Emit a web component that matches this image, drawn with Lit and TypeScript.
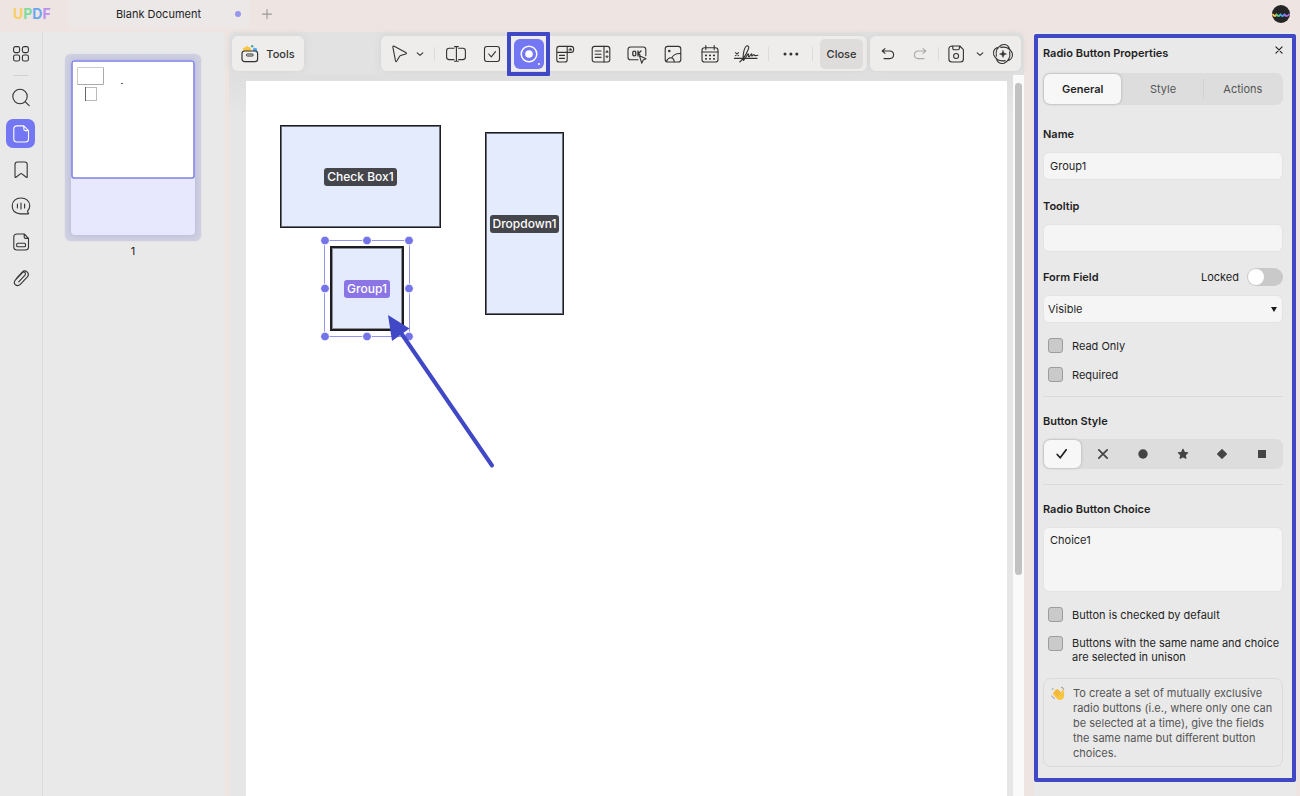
import { LitElement, html, css, svg } from "lit";
import { customElement, property, state } from "lit/decorators.js";
import { classMap } from "lit/directives/class-map.js";

const ICONS: Record<string, unknown> = {
  grid: svg`<rect x="3.6" y="3.6" width="6" height="6" rx="1.8"/><rect x="12.4" y="3.6" width="6" height="6" rx="1.8"/><rect x="3.6" y="12" width="6" height="6" rx="1.8"/><rect x="12.4" y="12" width="6" height="6" rx="1.8"/>`,
  search: svg`<circle cx="10" cy="9.500" r="7.2"/><path d="M15.3 14.8 19.2 18.7"/>`,
  page: svg`<path d="M13.5 2.9H7.2Q3.8 2.9 3.8 6v10Q3.8 19 7.2 19h8Q18.5 19 18.5 16V7.6L13.8 2.9V6Q13.8 7.6 15.4 7.6h3"/>`,
  bookmark: svg`<path d="M5 17.8V5.4Q5 3 7.4 3h7.4Q17.2 3 17.2 5.4v12.4q0 1-.9.4l-4.4-3.3q-.8-.6-1.6 0L6 18.2q-1 .6-1-.4Z"/>`,
  comment: svg`<path d="M17.2 18.9h-7Q2.2 18.2 2.2 10.8C2.2 6 6 3 11 3s8.8 3.2 8.8 7.8q0 3-2.3 5.4.2 1.2 1 2 .5.7-1.3.7Z"/><path d="M7.4 9v4M11 8v6M14.6 9v4"/>`,
  form: svg`<path d="M13.8 3H7.2Q3.8 3 3.8 6v10q0 3 3.4 3h8q3.3 0 3.3-3V7.4L14.2 3v3q0 1.4 1.4 1.4h2.9"/><rect x="6.7" y="12.3" width="8.8" height="3.4" rx="1"/>`,
  clip: svg`<path d="m6.2 11.6 6-6.5q2.4-2.3 4.8-.3 2.6 2.3.4 5l-7.1 7.6q-2.4 2.2-4.9.4-2.2-2-.1-4.6l7.2-7.6q1.3-1.1 2.5 0 1.1 1.2 0 2.5l-6.3 6.7"/>`,
  cursor: svg`<path d="M4.9 4.4q-.3-1.8 1.3-1.1l11.6 6.2q1.5.9-.1 1.5l-5 1.5q-.8.3-1.2 1L8.8 18q-.9 1.4-1.3-.1Z"/>`,
  chevron: svg`<path d="m8.2 9.8 2.8 2.5 2.8-2.5"/>`,
  textfield: svg`<path d="M9 5.3H4.2Q1.6 5.3 1.6 8v6q0 2.6 2.6 2.6H9M13.6 5.3h4.2q2.6 0 2.6 2.7v6q0 2.6-2.6 2.6h-4.2M11.4 4v14M9.5 3.6h3.8M9.5 18.3h3.8"/>`,
  check: svg`<rect x="3.5" y="3.500" width="15" height="15" rx="2.4"/><path d="m7.700 11 2.600 2.800 4.200-5.200"/>`,
  radio: svg`<circle cx="11" cy="11" r="7.8" stroke-width="1.5"/><circle cx="11" cy="11" r="3.8" fill="currentColor" stroke="none"/><circle cx="21" cy="21" r="1" fill="currentColor" stroke="none"/>`,
  dropdown: svg`<path d="M13.2 9.4H2.8V5.8q0-2.4 2.4-2.4h12q2.4 0 2.4 2.4v1.2q0 2.4-2.4 2.4h-4V3.4M2.8 9.4v7.3Q2.8 19 5.2 19h5.6q2.4 0 2.4-2.3V9.4M5.5 12.4h5M5.5 15.4h5"/><path d="M15 7.2h3l-1.5-2Z" fill="currentColor" stroke-width=".5"/>`,
  list: svg`<rect x="2.2" y="3.4" width="17.6" height="15.6" rx="2.5"/><path d="M14 3.4V19M5.2 8h5.8M5.2 11.2h5.8M5.2 14.4h5.8" /><path d="m16 9 1-1.4 1 1.4ZM16 13.4l1 1.4 1-1.4Z" fill="currentColor" stroke-width=".8"/>`,
  ok: svg`<path d="M12 16.8H4.6Q2 16.8 2 14.2V6.6Q2 4 4.6 4h12.6q2.6 0 2.6 2.6v6.2"/><rect x="6.8" y="8.2" width="3" height="4.6" rx="1.4" stroke-width="1.3"/><path d="M12 8v5M15 8l-2.6 2.6L14 12" stroke-width="1.3"/><path d="m13.4 12.7 6.6 3-2.8 1.3-1.5 3.2Z" fill="#eeedeb"/>`,
  image: svg`<rect x="3.2" y="3.4" width="15.6" height="15.6" rx="2.6"/><path d="M4.4 18.2Q7 13.5 10.5 15.3q1.6 1 1.8 3.5M9.6 15Q12.5 10 18.6 10.6"/><circle cx="7.3" cy="8" r=".7" fill="currentColor"/>`,
  calendar: svg`<rect x="3" y="4.8" width="16" height="14.2" rx="2.6"/><path d="M3 9h16M6.8 2.6v4M15.2 2.6v4"/><path d="M6.8 12.4h.4M10.8 12.4h.4M14.8 12.4h.4M6.8 15.8h.4M10.8 15.8h.4M14.8 15.8h.4" stroke-width="1.700"/>`,
  sign: svg`<path d="m.5 9.6 3 3M3.5 9.6l-3 3M-.6 15.4H22"/><path d="M4.8 19Q9.6 15 13.3 6.2q1.2-3.2-.7-3.4-2.4 0-3.7 5.3-1.4 6.2-.3 9.4Q11 14 12.5 11.5q1.4-1.5 1 .5-.6 2 .8 1.7l2-2.7q.8-.4.4 1-.3 1.6.9.6 1-1.4 1.7-.8.2 1.4 3.6.4"/>`,
  dots: svg`<g fill="currentColor" stroke="none"><circle cx="5" cy="11" r="1.5"/><circle cx="10.9" cy="11" r="1.5"/><circle cx="16.8" cy="11" r="1.5"/></g>`,
  undo: svg`<path d="M8 5.6 5.2 8 8 10.4M5.4 8h7.4q3.8.2 3.8 3.8-.1 3.8-3.8 3.8H7"/>`,
  redo: svg`<path d="M14 5.6 16.8 8 14 10.4M16.6 8H9.2q-3.8.2-3.8 3.8.1 3.8 3.8 3.8H15"/>`,
  save: svg`<path d="M7.4 3h7.4L18.4 6.6V16q0 3-3 3H6.9q-3 0-3-3V6q0-3 3.5-3ZM7.8 3v2.2q0 1.6 1.6 1.6h3.4q1.6 0 1.6-1.6V3"/><circle cx="11.1" cy="13" r="2.5"/>`,
  ai: svg`<g stroke-width="1.1"><path d="M4.400 13.200Q2.800 5.200 10 1.800q5-1.400 7.400 3.400M8.800 4.400Q16.800 2.800 20.200 10q1.400 5-3.400 7.400M17.600 8.800q1.600 8-5.600 11.400-5 1.400-7.400-3.400M13.200 17.600q-8 1.600-11.400-5.600-1.400-5 3.400-7.400"/></g><path d="m11 7.400 1 2.600 2.600 1-2.600 1-1 2.600-1-2.600-2.600-1 2.600-1Z" fill="currentColor" stroke-width=".4"/>`,
  close: svg`<path d="m7.900 7.900 6.200 6.200M14.100 7.900l-6.200 6.200"/>`,
  plus: svg`<path d="M11 6.600v9M6.500 11.100h9"/>`,
  styleCheck: svg`<path d="m6.200 11.500 3 3.300 6-8" stroke-width="1.700"/>`,
  styleCross: svg`<path d="m6.800 6.800 8.400 8.400M15.200 6.800l-8.400 8.400" stroke-width="1.700"/>`,
  styleCircle: svg`<circle cx="11" cy="11" r="4.700" fill="currentColor" stroke="none"/>`,
  styleStar: svg`<path d="m11 6.300 1.400 3 3.300.4-2.400 2.300.6 3.300-2.900-1.600-2.900 1.600.6-3.300-2.400-2.300 3.300-.4Z" fill="currentColor"/>`,
  styleDiamond: svg`<path d="M11 6.600 15.400 11 11 15.400 6.600 11Z" fill="currentColor"/>`,
  styleSquare: svg`<rect x="7" y="7" width="8" height="8" fill="currentColor" stroke="none"/>`,
};

@customElement("ui-icon")
class UiIcon extends LitElement {
  @property() name = "";
  static styles = css`
    :host { display: block; width: 22px; height: 22px; flex: none; }
    svg { display: block; overflow: visible; fill: none; stroke: currentColor; stroke-width: 1.1; stroke-linecap: round; stroke-linejoin: round; }
  `;
  render() {
    return html`<svg width="22" height="22" viewBox="0 0 22 22" aria-hidden="true">${ICONS[this.name]}</svg>`;
  }
}

const RAIL = [
  ["search", "Search"], ["page", "Thumbnails"], ["bookmark", "Bookmarks"],
  ["comment", "Comments"], ["form", "Fields"], ["clip", "Attachments"],
];

@customElement("side-rail")
class SideRail extends LitElement {
  static styles = css`
    :host { display: flex; flex-direction: column; align-items: center; gap: 7px; padding: 7px 1px 0 0; width: 41px; border-right: 1px solid #dadcdd; color: #333; flex: none; }
    button { display: grid; place-items: center; width: 29px; height: 29px; padding: 0; border: 0; border-radius: 7px; background: none; color: inherit; }
    .active { background: #7477f3; color: #fff; }
    .divider { width: 15px; height: 1px; background: #d0d0d0; }
  `;
  render() {
    return html`
      <button aria-label="All tools"><ui-icon name="grid"></ui-icon></button>
      <div class="divider"></div>
      ${RAIL.map(([icon, label]) => html`
        <button aria-label=${label} class=${classMap({ active: icon === "page" })}><ui-icon name=${icon}></ui-icon></button>`)}
    `;
  }
}

@customElement("page-thumbnails")
class PageThumbnails extends LitElement {
  static styles = css`
    :host { display: flex; flex-direction: column; align-items: center; gap: 2px; padding: 22px 2px 0 0; box-sizing: border-box; width: 182px; flex: none; font-size: 11px; line-height: 16px; }
    .frame { padding: 6px; border-radius: 6px; background: #cfcfe2; box-shadow: 0 0 2px #d5d5e2; }
    .sheet { display: block; width: 124px; height: 175px; padding: 0; border: 0; border-radius: 4px; background: #e7e7fd; box-shadow: 0 0 5px #b4b4d2; overflow: hidden; }
    svg { display: block; }
  `;
  render() {
    return html`
      <div class="frame">
        <button class="sheet" aria-label="Page 1">
          <svg width="124" height="175" viewBox="0 0 124 175" fill="none">
            <rect x="1" y="1" width="122" height="117" rx="2" fill="#fff" stroke="#7f81e6" stroke-width="1.6"/>
            <path d="M6.5 24.5v-17h26" stroke="#ccc"/><path d="M6.5 24.5h26v-17" stroke="#aaa"/>
            <rect x="14.5" y="27.500" width="11" height="13" stroke="#bbb"/><path d="M14.5 27v14" stroke="#666"/>
            <rect x="50" y="23" width="2" height="1" fill="#555"/>
          </svg>
        </button>
      </div>
      <span>1</span>
    `;
  }
}

const FIELD_TOOLS = [
  ["textfield", "Text field"], ["check", "Check box"], ["radio", "Radio button"],
  ["dropdown", "Dropdown"], ["list", "List box"], ["ok", "Button"],
  ["image", "Image"], ["calendar", "Date"], ["sign", "Signature"],
];

@customElement("form-toolbar")
class FormToolbar extends LitElement {
  static styles = css`
    :host { display: flex; gap: 3px; padding: 4px 3px 4px; color: #333; flex: none; }
    .group { display: flex; align-items: center; height: 35px; border-radius: 6px; background: #eeedeb; box-shadow: 0 0 8px #d2d2d2; }
    button { display: grid; place-items: center; padding: 0; border: 0; background: none; color: inherit; height: 30px; width: 30px; font: 500 11px/16px Inter, sans-serif; }
    .tools { display: flex; gap: 7px; width: 72px; margin-right: auto; justify-content: center; height: 35px; border-radius: 6px; background: #eeedeb; box-shadow: 0 0 8px #d2d2d2; align-items: center; }
    .main { width: 486px; box-sizing: border-box; padding: 0 4px 0 3px; }
    .narrow { width: 12px; }
    .narrow ui-icon { margin: 0 -5px; }
    .divider { width: 1px; height: 14px; background: #dcdcdc; flex: none; }
    .pick { display: flex; align-items: center; width: 50px; }
    .fields { flex: 1; display: grid; grid-template-columns: repeat(9, 1fr); justify-items: center; padding: 0 4px 0 3px; }
    .slot { position: relative; }
    .active { background: #7477f3; color: #fff; border-radius: 6px; }
    .marker { position: absolute; inset: -7px -6px -7px -7px; border: 4px solid #4048c6; border-radius: 1px; pointer-events: none; }
    .more { width: 43px; }
    .close { width: 43px; margin-left: 7px; background: #dedddc; border-radius: 5px; }
    .history { width: 151px; box-sizing: border-box; justify-content: space-between; padding: 0 3px; }
    .off { color: #aaa; }
  `;
  render() {
    return html`
      <button class="tools">
        <svg width="18" height="20" viewBox="0 0 18 20" fill="none" aria-hidden="true">
          <path d="M2 7.200V4.600L4 3h1.200L6.200 1.600 7.400 3h1.200l1.400 1.800v2.400Z" fill="#f9c644"/>
          <circle cx="11.200" cy="2.200" r="1.300" fill="#4fa9a5"/><circle cx="14" cy="6" r="2.200" fill="#56a7ed"/>
          <rect x="1" y="7" width="15.600" height="10.600" rx="2.600" stroke="#333" stroke-width="1.200" fill="#eeedeb"/>
          <rect x="5.400" y="10" width="6.800" height="2" rx="1" stroke="#333" stroke-width="1"/>
        </svg>
        <span>Tools</span>
      </button>
      <div class="group main">
        <div class="pick">
          <button aria-label="Select"><ui-icon name="cursor"></ui-icon></button>
          <button class="narrow" aria-label="Select options"><ui-icon name="chevron"></ui-icon></button>
        </div>
        <div class="divider"></div>
        <div class="fields">
          ${FIELD_TOOLS.map(([icon, label]) => html`
            <div class="slot">
              <button aria-label=${label} class=${classMap({ active: icon === "radio" })}><ui-icon name=${icon}></ui-icon></button>
              ${icon === "radio" ? html`<div class="marker"></div>` : ""}
            </div>`)}
        </div>
        <div class="divider"></div>
        <button class="more" aria-label="More"><ui-icon name="dots"></ui-icon></button>
        <div class="divider"></div>
        <button class="close">Close</button>
      </div>
      <div class="group history">
        <button aria-label="Undo"><ui-icon name="undo"></ui-icon></button>
        <button class="off" aria-label="Redo"><ui-icon name="redo"></ui-icon></button>
        <div class="divider"></div>
        <button aria-label="Save"><ui-icon name="save"></ui-icon></button>
        <button class="narrow" aria-label="Save options"><ui-icon name="chevron"></ui-icon></button>
        <button aria-label="Assistant"><ui-icon name="ai"></ui-icon></button>
      </div>
    `;
  }
}

@customElement("document-view")
class DocumentView extends LitElement {
  static styles = css`
    :host { display: flex; flex: 1; min-height: 0; padding-left: 17px; gap: 6px; background: linear-gradient(#dedede, #e6e6e6 40px); }
    .page { position: relative; flex: 1; margin-top: 6px; background: #fff; overflow: hidden; }
    .field { position: absolute; display: grid; place-items: center; box-sizing: border-box; border: 1px solid #1c1c22; box-shadow: inset 0 0 0 1px #6c6f7a; background: #e4ebfc; }
    .tag { padding: 0 3px; border-radius: 3px; background: #45464c; color: #fff; font-size: 12px; font-weight: 500; line-height: 18px; white-space: nowrap; }
    .checkbox { left: 34px; top: 44px; width: 161px; height: 103px; }
    .dropdown { left: 239px; top: 51px; width: 79px; height: 183px; }
    .group { left: 84px; top: 165px; width: 74px; height: 85px; border-width: 2px; box-shadow: inset 0 0 0 1px #8e8e96; }
    .group .tag { background: #8b74e6; }
    .selection, .arrow { position: absolute; left: 0; top: 0; overflow: visible; }
    .track { width: 11px; padding: 8px 2px 0; box-sizing: border-box; background: #fafafa; flex: none; }
    .thumb { height: 69%; border-radius: 4px; background: #c1c1c1; }
  `;
  render() {
    const xs = [79, 121, 163];
    const ys = [159.5, 207.5, 255.5];
    return html`
      <div class="page">
        <div class="field checkbox"><span class="tag">Check Box1</span></div>
        <div class="field dropdown"><span class="tag">Dropdown1</span></div>
        <div class="field group"><span class="tag">Group1</span></div>
        <svg class="selection" width="200" height="280" aria-hidden="true">
          <rect x="78.5" y="159.5" width="85" height="96" fill="none" stroke="#9193ee"/>
          ${ys.map((y) => xs.map((x) => x === 121 && y === 207.5 ? svg`` : svg`
            <circle cx=${x} cy=${y} r="4.4" fill="#7274e8" stroke="#fff" stroke-width="1"/>`))}
        </svg>
        <svg class="arrow" width="260" height="400" aria-hidden="true">
          <path d="M153 249 246 384.500" stroke="#4048c6" stroke-width="4" stroke-linecap="round"/>
          <path d="M142 234 163.500 247.500 146 260Z" fill="#4048c6"/>
        </svg>
      </div>
      <div class="track"><div class="thumb"></div></div>
    `;
  }
}

const TABS = ["General", "Style", "Actions"];
const MARKS = ["Check", "Cross", "Circle", "Star", "Diamond", "Square"];

@customElement("properties-panel")
class PropertiesPanel extends LitElement {
  @state() private tab = "General";
  @state() private mark = "Check";
  static styles = css`
    :host { display: block; width: 262px; flex: none; margin: 2px 4px 0 0; color: #1f1f1f; font-size: 11px; line-height: 16px; }
    .frame { border: 4px solid #4048c6; border-radius: 2px; padding: 7px 9px 11px 5px; display: flex; flex-direction: column; }
    button, input, textarea, select { font: inherit; color: inherit; margin: 0; }
    button { padding: 0; border: 0; background: none; }
    .row { display: flex; align-items: center; }
    h2, .label { margin: 0; font-size: 11px; line-height: 16px; font-weight: 600; }
    h2 { flex: 1; }
    .title-row { align-items: flex-start; height: 16px; }
    .x { display: grid; place-items: center; width: 22px; height: 22px; margin: -6px -7px 0 0; }
    .tabs { display: grid; grid-template-columns: repeat(3, 1fr); align-items: center; margin: 12px 0 21px; padding: 1px; height: 30px; background: #dddddd; border-radius: 7px; color: #555; }
    .tabs button { height: 20px; }
    .tabs button + button + button { border-left: 1px solid #d0d0d0; }
    .tabs .on, .marks .on { height: 100%; background: #f7f7f7; border-radius: 6px; box-shadow: 0 0 3px #aaa; color: #1f1f1f; font-weight: 600; }
    .tabs .on { margin-right: 2px; }
    .marks .on { margin-right: 3px; }
    .box { display: block; width: 100%; box-sizing: border-box; height: 28px; border: 1px solid #e4e4e4; border-radius: 6px; background: #f5f5f5; padding: 0 6px; margin: 10px 0 18px; outline: 0; }
    .form-row { height: 18px; margin-top: -2px; gap: 8px; }
    .form-row .label { flex: 1; }
    .switch { appearance: none; width: 36px; height: 18px; border-radius: 9px; background: #c9c9c9; padding: 1px; display: flex; }
    .switch::before { content: ""; width: 16px; height: 16px; border-radius: 50%; background: #fff; }
    .select { position: relative; margin: 9px 0 15px; }
    .select select { appearance: none; margin: 0; padding: 0 4px; }
    .caret { position: absolute; right: 6px; top: 12px; width: 6px; height: 5px; background: #1a1a1a; clip-path: polygon(0 0, 100% 0, 50% 100%); pointer-events: none; }
    .option { display: flex; align-items: flex-start; gap: 9px; padding-left: 5px; margin-bottom: 13px; }
    .option.wrap { line-height: 14px; margin-bottom: 14px; }
    .option input { appearance: none; flex: none; width: 15px; height: 15px; border: 1px solid #9d9d9d; border-radius: 3px; background: #cacaca; }
    hr { width: 100%; height: 1px; margin: 0 0 16px; border: 0; background: #d9d9d9; }
    .marks { display: grid; grid-template-columns: repeat(6, 1fr); margin: 10px 0 15px; padding: 1px; height: 28px; border-radius: 7px; background: #dddddd; color: #444; }
    .marks button { display: grid; place-items: center; }
    .area { height: 65px; padding: 4px 6px; resize: none; margin-bottom: 15px; }
    .tip { display: flex; gap: 7px; border: 1px solid #dbdbdb; border-radius: 8px; padding: 7px 6px 5px 7px; line-height: 15px; color: #555; }
    .tip svg { flex: none; }
    .tip p { margin: 0; }
  `;
  render() {
    const option = (id: string, text: string, wrap = false) => html`
      <div class=${classMap({ option: true, wrap })}><input type="checkbox" id=${id} /><label for=${id}>${text}</label></div>`;
    return html`
      <div class="frame">
        <div class="row title-row"><h2>Radio Button Properties</h2>
          <button class="x" aria-label="Close panel"><ui-icon name="close"></ui-icon></button></div>
        <div class="tabs" role="tablist">
          ${TABS.map((t) => html`<button role="tab" aria-selected=${t === this.tab} class=${classMap({ on: t === this.tab })} @click=${() => (this.tab = t)}>${t}</button>`)}
        </div>
        <label class="label" for="name">Name</label>
        <input class="box" id="name" type="text" value="Group1" />
        <label class="label" for="tooltip">Tooltip</label>
        <input class="box" id="tooltip" type="text" />
        <div class="row form-row">
          <label class="label" for="visibility">Form Field</label>
          <label for="locked">Locked</label><input class="switch" id="locked" type="checkbox" role="switch" />
        </div>
        <div class="select">
          <select class="box" id="visibility"><option>Visible</option><option>Hidden</option></select>
          <span class="caret"></span>
        </div>
        ${option("readonly", "Read Only")}
        ${option("required", "Required")}
        <hr />
        <span class="label">Button Style</span>
        <div class="marks">
          ${MARKS.map((m) => html`<button aria-label=${m} aria-pressed=${m === this.mark} class=${classMap({ on: m === this.mark })} @click=${() => (this.mark = m)}><ui-icon name=${"style" + m}></ui-icon></button>`)}
        </div>
        <hr />
        <label class="label" for="choice">Radio Button Choice</label>
        <textarea class="box area" id="choice">Choice1</textarea>
        ${option("default", "Button is checked by default")}
        ${option("unison", "Buttons with the same name and choice are selected in unison", true)}
        <div class="tip">
          <svg width="15" height="15" viewBox="0 0 15 15" aria-hidden="true">
            <path d="M2 6.200q.8-1 1.700.1L3 4.800q.6-1.400 1.900-.3l.4.400-.6-1q.6-1.500 2-.3L10.200 7l.6-2.700q.8-1.700 1.900-.2l.4 5.200q0 4-4 4.700-2 .1-3.700-1.700L2.200 8.800q-.9-1 .3-1.500Z" fill="#fbc43f"/>
            <path d="m3.700 6.300 3 3M5 4.800l3 3.200M6.700 3.600l3 3.200" stroke="#d9962e" stroke-width=".7" fill="none" stroke-linecap="round"/>
            <path d="M10.500 1.200q2 .3 2.300 2M.8 10q.7 2 2.600 2.600M1 3.500 2.200 2.200" stroke="#888" stroke-width=".9" fill="none" stroke-linecap="round"/>
          </svg>
          <p>To create a set of mutually exclusive radio buttons (i.e., where only one can be selected at a time), give the fields the same name but different button choices.</p>
        </div>
      </div>
    `;
  }
}

@customElement("app-root")
class AppRoot extends LitElement {
  static styles = css`
    :host { display: flex; flex-direction: column; height: 100vh; overflow: hidden; background: #eee4e1; font-family: Inter, "Liberation Sans", sans-serif; font-size: 11px; color: #1f1f1f; }
    header { display: flex; align-items: center; height: 28px; padding: 0 10px 0 13px; margin-bottom: 4px; flex: none; }
    .logo { width: 55px; font: 700 14px/16px Inter, sans-serif; }
    .u { color: #f8cf62; } .p { color: #7ddc9b; } .d { color: #69a8ee; } .f { color: #bd8fee; }
    .tab { display: flex; align-items: center; width: 182px; height: 28px; box-sizing: border-box; padding-right: 9px; background: #ebe8e7; border-radius: 0 0 5px 5px; }
    .tab span { flex: 1; text-align: center; padding-left: 14px; }
    .tab i { width: 6px; height: 6px; border-radius: 50%; background: #9698ea; }
    header button { display: grid; place-items: center; width: 22px; height: 22px; padding: 0; border: 0; background: none; color: #999; margin: 0 auto 0 6px; }
    main { display: flex; flex: 1; min-height: 0; }
    .left { display: flex; background: #e9e9e9; border-radius: 0 6px 0 0; margin-right: 4px; flex: none; }
    .center { display: flex; flex-direction: column; flex: 1; min-width: 0; background: #e2e2e2; border-radius: 6px 6px 0 0; margin-right: 10px; }
    .right { display: flex; background: #e9e9e9; border-radius: 6px 0 0; box-shadow: inset -4px 0 #eee4e1; }
  `;
  render() {
    return html`
      <header>
        <div class="logo" aria-label="UPDF"><span class="u">U</span><span class="p">P</span><span class="d">D</span><span class="f">F</span></div>
        <div class="tab"><span>Blank Document</span><i></i></div>
        <button aria-label="New tab"><ui-icon name="plus"></ui-icon></button>
        <svg width="18" height="18" viewBox="0 0 18 18" fill="none" aria-hidden="true">
          <circle cx="9" cy="9" r="9" fill="#252525"/>
          <g stroke-width="1.800" stroke-linecap="round"><path d="M1 9.500q2 3 3.500 0" stroke="#f4c64c"/><path d="M4.500 9.500q2 3 4 0" stroke="#53ce8c"/><path d="M8.500 9.500q2 3 4 0" stroke="#4e9cf0"/><path d="M12.500 9.500q2 3 4.500 0" stroke="#a974ea"/></g>
        </svg>
      </header>
      <main>
        <div class="left"><side-rail></side-rail><page-thumbnails></page-thumbnails></div>
        <section class="center"><form-toolbar></form-toolbar><document-view></document-view></section>
        <aside class="right"><properties-panel></properties-panel></aside>
      </main>
    `;
  }
}
